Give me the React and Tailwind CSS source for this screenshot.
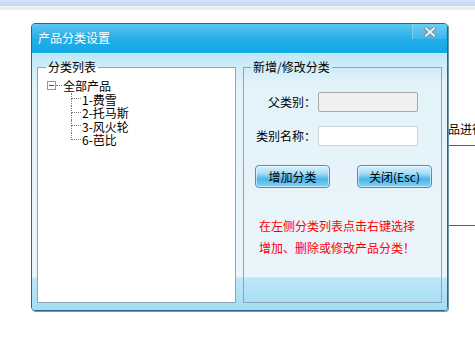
import React from 'react'

const children = ['1-费雪', '2-托马斯', '3-风火轮', '6-芭比']

const TreeRow = ({ label, last }) => (
  <div className="flex h-[13.5px] items-stretch">
    <div className="flex w-[10px] flex-col">
      <div className="h-1/2 border-l border-b border-dotted border-[#7a7a7a]"></div>
      <div className={last ? 'flex-1' : 'flex-1 border-l border-dotted border-[#7a7a7a]'}></div>
    </div>
    <span className="ml-px flex items-center leading-[13.5px]">{label}</span>
  </div>
)

const Btn = ({ children }) => (
  <button className="h-[23px] w-[75px] rounded-[4px] border border-[#3b93d6] bg-[linear-gradient(to_bottom,#d8f1fd,#a8ddf7_35%,#4ab5ea_62%,#86d2f4)] text-[12px] leading-[14px] text-black shadow-[inset_0_0_0_1px_rgba(255,255,255,0.55)]">
    {children}
  </button>
)

export default function App() {
  return (
    <div className="relative h-[340px] w-[475px] overflow-hidden bg-white font-['Noto_Sans_CJK_SC','Noto_Sans',sans-serif] text-[12px] text-black">
      {/* page behind the dialog */}
      <div className="h-[6px] bg-gradient-to-b from-[#d6e6fb] to-[#bdd6f8]"></div>
      <div className="h-px bg-[#f3f6fa]"></div>
      <div className="h-[3px] bg-[#ececec]"></div>
      <div className="mt-[112px] whitespace-nowrap pl-[448px] leading-[14px]">品进行设置</div>
      <div className="ml-[448px] mt-[9px] h-px bg-[#2a6a90]"></div>
      <div className="ml-[448px] mt-[79px] h-px bg-[#2a6a90]"></div>

      {/* dialog */}
      <div className="absolute left-[31px] top-[23px] flex h-[288px] w-[417px] flex-col overflow-hidden rounded-[4px] border border-[#28678c] shadow-[1px_1px_0_#6f97ae]">
        <div className="flex h-[29px] shrink-0 bg-gradient-to-b from-[#58c6f0] via-[#22aee8] to-[#12a8e5]">
          <span className="ml-[6px] mt-[7px] leading-[14px] text-white">产品分类设置</span>
          <div className="ml-auto mr-px flex h-[15px] w-[34px] items-center justify-center border-l border-[#7dd0f1] bg-gradient-to-b from-[#6ccdf1] to-[#3ab7ea]">
            <svg width="12" height="10" viewBox="0 0 12 10">
              <path d="M2 1.5 L10 8.5 M10 1.5 L2 8.5" stroke="#7d8c96" strokeWidth="4" strokeLinecap="square" />
              <path d="M2 1.5 L10 8.5 M10 1.5 L2 8.5" stroke="#eef1f3" strokeWidth="2" strokeLinecap="square" />
            </svg>
          </div>
        </div>
        <div className="h-px shrink-0 bg-[#c9eefa]"></div>
        <div className="flex flex-1 gap-[7px] bg-[linear-gradient(to_bottom,#c0e7f7,#e3f3fa_30px,#eaf5fa_223px,#bde7f7_224px,#a2dcf3)] px-[5px] pt-[6px]">
          {/* left: tree */}
          <fieldset className="h-[243px] w-[200px] border border-[#8aa6bc] bg-white pt-[5px]">
            <legend className="ml-[8px] px-[2px] leading-[14px]">分类列表</legend>
            <div className="pl-[9px]">
              <div className="flex h-[13.5px] items-center">
                <div className="flex h-[9px] w-[9px] items-center justify-center border border-[#8c9aa6] bg-white">
                  <div className="h-px w-[5px] bg-[#2f4a9a]"></div>
                </div>
                <div className="w-[6px] border-t border-dotted border-[#7a7a7a]"></div>
                <span className="ml-px leading-[13.5px]">全部产品</span>
              </div>
              <div className="ml-[24px]">
                {children.map((c, i) => (
                  <TreeRow key={c} label={c} last={i === children.length - 1} />
                ))}
              </div>
            </div>
          </fieldset>

          {/* right: form */}
          <fieldset className="h-[243px] w-[200px] border border-[#8aa6bc] pt-[18px]">
            <legend className="ml-[7px] px-[2px] leading-[14px]">新增/修改分类</legend>
            <div className="grid grid-cols-[72px_100px] items-center gap-x-[2px] gap-y-[14px]">
              <span className="text-right leading-[14px]">父类别：</span>
              <div className="h-[20px] rounded-[2px] border border-[#a9a9a9] bg-[#f0f0f0]"></div>
              <span className="text-right leading-[14px]">类别名称：</span>
              <input className="h-[20px] rounded-[2px] border border-[#c9d3da] bg-white px-1 outline-none" />
            </div>
            <div className="ml-[11px] mt-[19px] flex gap-[27px]">
              <Btn>增加分类</Btn>
              <Btn>关闭(Esc)</Btn>
            </div>
            <div className="ml-[15px] mt-[27px] leading-[22px] text-[#ff0000]">
              <div>在左侧分类列表点击右键选择</div>
              <div>增加、删除或修改产品分类！</div>
            </div>
          </fieldset>
        </div>
      </div>
    </div>
  )
}
